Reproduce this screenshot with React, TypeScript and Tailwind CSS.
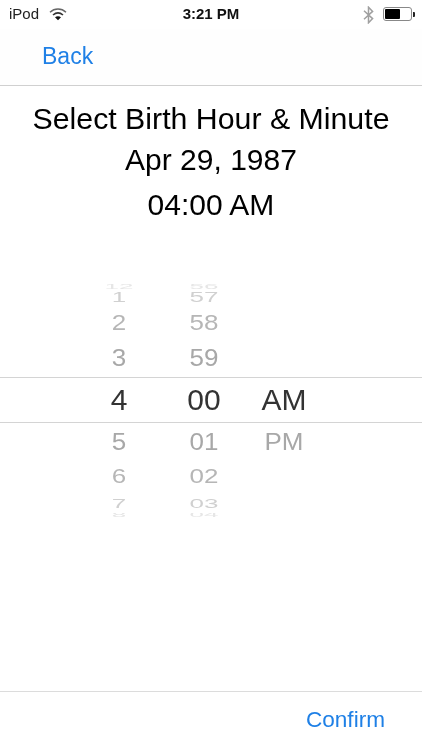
const font = { fontFamily: '"Liberation Sans", Arial, sans-serif' };

function Wifi() {
  return (
    <svg width="18" height="14" viewBox="0 0 18 14" className="ml-[10px] -mt-[1px]">
      <path d="M1 5.2C5.6 1 12.4 1 17 5.2" fill="none" stroke="#666" strokeWidth="1.5" />
      <path d="M4 8C7 5.4 11 5.4 14 8" fill="none" stroke="#333" strokeWidth="1.6" />
      <path d="M9 13.2L6 10.2C7.8 8.8 10.2 8.8 12 10.2Z" fill="#111" />
    </svg>
  );
}

function Bluetooth() {
  return (
    <svg width="11" height="18" viewBox="0 0 11 18">
      <path d="M1 4.8L9.6 12.6L5.5 16.8V1.2L9.6 5.4L1 13.2" fill="none" stroke="#a0a0a0" strokeWidth="1.5" />
    </svg>
  );
}

function Battery() {
  return (
    <div className="flex items-center ml-[9px] -mt-[1px]">
      <div className="w-[29px] h-[14px] border border-[#888] rounded-[3px] p-[1px] flex">
        <div className="w-[15px] bg-black rounded-[1px]" />
      </div>
      <div className="w-[2px] h-[5px] bg-[#222] rounded-r-[1px] ml-[1px]" />
    </div>
  );
}

function Row({ h, color, scale, a, b, c }: { h: string; color: string; scale: string; a: string; b: string; c?: string }) {
  return (
    <div className={`${h} ${color} text-[26px] overflow-hidden pr-[24px] grid grid-cols-[80px_90px_70px] justify-center content-center items-center text-center leading-none`}>
      <div className={scale}>{a}</div>
      <div className={scale}>{b}</div>
      <div className={scale}>{c}</div>
    </div>
  );
}

export default function App() {
  return (
    <div style={font} className="w-[422px] h-[750px] bg-white flex flex-col text-black overflow-hidden blur-[0.3px]">
      <div className="h-[29px] pl-[9px] pr-[7px] flex items-center text-[15px] relative shrink-0">
        <span className="text-[#222]">iPod</span>
        <Wifi />
        <span className="flex-1" />
        <Bluetooth />
        <Battery />
        <span className="absolute left-0 right-0 text-center font-bold text-[15px] text-[#111]">3:21 PM</span>
      </div>
      <div className="h-[57px] border-b border-[#d0d0d0] bg-[#fefefe] pl-[42px] flex items-center text-[23px] text-[#1f80e6] shrink-0">
        <span className="-mt-[1px]">Back</span>
      </div>
      <div className="flex flex-col items-center text-[#000] text-[30px] leading-[43px] pt-[11px] h-[197px] shrink-0">
        <div className="text-[30.3px]">Select Birth Hour &amp; Minute</div>
        <div className="-mt-[2px]">Apr 29, 1987</div>
        <div className="mt-[2px]">04:00 AM</div>
      </div>
      <div className="flex flex-col shrink-0">
        <Row h="h-[6px]" color="text-[#e6e6e6]" scale="scale-y-[0.3]" a="12" b="56" />
        <Row h="h-[16px]" color="text-[#d0d0d0]" scale="scale-y-[0.55]" a="1" b="57" />
        <Row h="h-[34px]" color="text-[#b6b6b6]" scale="scale-y-[0.87]" a="2" b="58" />
        <Row h="h-[38px] pb-[2px]" color="text-[#a8a8a8]" scale="scale-y-[0.95]" a="3" b="59" />
        <div className="h-[46px] pr-[24px] border-y border-[#d4d4d4] text-[30px] text-[#333] grid grid-cols-[80px_90px_70px] justify-center items-center text-center leading-none">
          <div>4</div>
          <div>00</div>
          <div>AM</div>
        </div>
        <Row h="h-[36px]" color="text-[#a8a8a8]" scale="scale-y-[0.95]" a="5" b="01" c="PM" />
        <Row h="h-[34px]" color="text-[#b6b6b6]" scale="scale-y-[0.8]" a="6" b="02" />
        <Row h="h-[20px]" color="text-[#d0d0d0]" scale="scale-y-[0.5]" a="7" b="03" />
        <Row h="h-[4px]" color="text-[#e6e6e6]" scale="scale-y-[0.25]" a="8" b="04" />
      </div>
      <div className="flex-1" />
      <div className="h-[59px] border-t border-[#dcdcdc] pr-[37px] flex justify-end items-center text-[22.6px] text-[#1f80e6] shrink-0">
        <span className="-mt-[2px]">Confirm</span>
      </div>
    </div>
  );
}
